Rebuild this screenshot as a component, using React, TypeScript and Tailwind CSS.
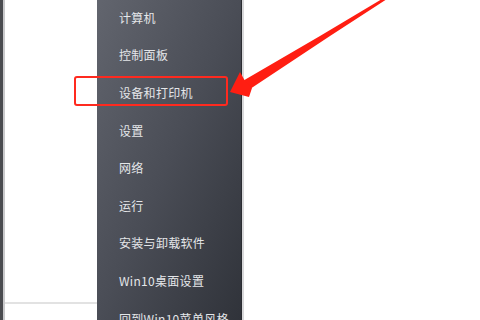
const items = [
  "计算机",
  "控制面板",
  "设备和打印机",
  "设置",
  "网络",
  "运行",
  "安装与卸载软件",
  "Win10桌面设置",
  "回到Win10菜单风格",
]

export default function App() {
  return (
    <div
      className="relative flex h-[320px] w-[480px] overflow-hidden bg-white"
      style={{ fontFamily: '"Noto Sans CJK SC", "Noto Sans", sans-serif' }}
    >
      {/* left page edge */}
      <div className="flex w-[97px] shrink-0">
        <div className="w-[3px] bg-[#4a4b4f]" />
        <div className="w-[2px] bg-[#c9c9cb]" />
        <div className="flex flex-1 flex-col">
          <div className="h-[302px]" />
          <div className="h-[2px] bg-[#e2e2e2]" />
        </div>
      </div>

      {/* start menu column */}
      <div className="flex w-[145px] shrink-0 flex-col bg-gradient-to-br from-[#62656e] via-[#4a4d56] to-[#30333a] pl-[22px] border-r border-[#2a2c31]">
        <div className="mt-[-1px] flex flex-col">
          {items.map((label) => (
            <div
              key={label}
              className="flex h-[37.6px] shrink-0 items-center text-[12px] tracking-[0.3px] whitespace-nowrap text-[#e4e6e9]"
            >
              {label}
            </div>
          ))}
        </div>
      </div>
      <div className="w-[2px] bg-[#d8d8da]" />
      <div className="flex-1 bg-white" />

      {/* red highlight box */}
      <div className="absolute left-[74px] top-[76px] h-[30px] w-[154px] rounded-[3px] border-2 border-[#ff2a1f]" />

      {/* red arrow */}
      <svg className="absolute left-0 top-0" width="480" height="320" viewBox="0 0 480 320">
        <path d="M241 82 L320 36 L382 -1 L387 -1 L330 36 L247 91 Z" fill="#ff1e12" />
        <path d="M230 92 L240 72 L245 81 L252 88 L249 97 Z" fill="#ff1e12" />
      </svg>
    </div>
  )
}
